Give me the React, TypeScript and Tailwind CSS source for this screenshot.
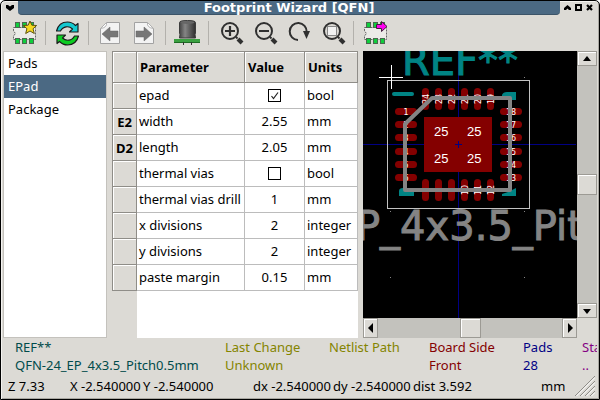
import React from "react";

const pages = ["Pads", "EPad", "Package"];

type Row = { label: string; name: string; value: string | boolean; units: string };

const rows: Row[] = [
  { label: "", name: "epad", value: true, units: "bool" },
  { label: "E2", name: "width", value: "2.55", units: "mm" },
  { label: "D2", name: "length", value: "2.05", units: "mm" },
  { label: "", name: "thermal vias", value: false, units: "bool" },
  { label: "", name: "thermal vias drill", value: "1", units: "mm" },
  { label: "", name: "x divisions", value: "2", units: "integer" },
  { label: "", name: "y divisions", value: "2", units: "integer" },
  { label: "", name: "paste margin", value: "0.15", units: "mm" },
];

const padY = [111.5, 124.5, 137.5, 151.5, 164.5, 177.5];
const padX = [425.5, 438.5, 451.5, 464.5, 477.5, 490.5];

function ChipBase() {
  return (
    <>
      <path d="M1.500 6.500h22v12h-22v-3.500l2-2.500-2-2.500z" fill="#ecebe8" stroke="#666" strokeDasharray="2 1" />
      {[3, 10, 17].map((x) => (
        <g key={x} fill="#0fce3c" stroke="#4c6650">
          <rect x={x + 0.5} y="1.500" width="4" height="5" />
          <rect x={x + 0.5} y="17.500" width="4" height="5" />
        </g>
      ))}
    </>
  );
}

function NewChipIcon() {
  return (
    <svg width="25" height="25" viewBox="0 0 25 25">
      <ChipBase />
      <path d="M18 0l1.900 4.200 4.700.3-3.600 3.300 1.300 4.700-4.300-2.500-4.300 2.500 1.200-4.800-3.600-3.200 4.800-.3z" fill="#f5d820" stroke="#5c5210" strokeWidth="1" />
    </svg>
  );
}

function ExportChipIcon() {
  return (
    <svg width="25" height="25" viewBox="0 0 25 25">
      <ChipBase />
      <path d="M13.500 3.500h5v-3l5.500 5-5.500 5v-3h-5z" fill="#ff00f0" stroke="#40203c" />
    </svg>
  );
}

function RefreshIcon() {
  return (
    <svg width="25" height="25" viewBox="0 0 25 25" stroke="#1c1c1c" strokeWidth="1.200" strokeLinejoin="round">
      <path d="M1.500 10C3 4 7.500 1 12.500 1c3.500 0 6 1.500 8 3.500l2.500-2v8.500h-8.500l3-3c-3.500-3.500-9.500-3-12 2z" fill="#14c9cf" />
      <path d="M23.500 15C22 21 17.500 24 12.500 24c-3.500 0-6-1.500-8-3.500l-2.500 2V14h8.500l-3 3c3.500 3.500 9.500 3 12-2z" fill="#0ccc22" />
    </svg>
  );
}

function PageIcon({ back }: { back?: boolean }) {
  return (
    <svg width="22" height="24" viewBox="0 0 22 24">
      <path d={back ? "M7.500 1.500h13v21h-19v-15z" : "M1.500 1.500h13l6 6v15h-19z"} fill="#f3f3f3" stroke="#a2a2a2" />
      <path d={back ? "M7.500 1.500q1 5-6 6z" : "M14.500 1.500q-1 5 6 6z"} fill="#fff" stroke="#b0b0b0" />
      <path d={back ? "M3 13l8-7v4h8v6h-8v4z" : "M19 13l-8-7v4H3v6h8v4z"} fill="#777" stroke="#666" strokeWidth=".5" />
    </svg>
  );
}

function CapacitorIcon() {
  return (
    <svg width="26" height="26" viewBox="0 0 26 26">
      <defs>
        <linearGradient id="can">
          <stop offset="0" stopColor="#444" />
          <stop offset=".35" stopColor="#858585" />
          <stop offset="1" stopColor="#2e2e2e" />
        </linearGradient>
      </defs>
      <path d="M5.500 2.500q0-2 8-2t8 2v11q0 .8-.8 1.400.8.400.8 1.600v1.500h-16v-1.500q0-1.200.8-1.600-.8-.6-.8-1.400z" fill="url(#can)" stroke="#3d3d3d" />
      <ellipse cx="13.500" cy="2.500" rx="7" ry="1.500" fill="#666" />
      <rect x="0" y="19" width="26" height="3" fill="#3aa040" />
      <path d="M0 22.500h26" stroke="#1c6c22" />
      <path d="M9.500 22v3M17.500 22v3" stroke="#333" strokeWidth="1" />
    </svg>
  );
}

function LensIcon({ kind }: { kind: "in" | "out" | "fit" }) {
  return (
    <svg width="24" height="24" viewBox="0 0 24 24" fill="none" stroke="#303030">
      <circle cx="10" cy="10" r="8" strokeWidth="2" />
      <path d="M16 16l1.500 1.500" strokeWidth="2" />
      <path d="M18 18l4 4" strokeWidth="4" />
      {kind === "fit" ? (
        <rect x="5.500" y="5.500" width="9" height="9" fill="#f2f2f2" stroke="#888" />
      ) : (
        <path d={kind === "in" ? "M5 10h10M10 5v10" : "M5 10h10"} strokeWidth="2.200" />
      )}
    </svg>
  );
}

function RedrawIcon() {
  return (
    <svg width="24" height="24" viewBox="0 0 24 24">
      <path d="M10 19A8.500 8.500 0 1 1 18.700 11" fill="none" stroke="#303030" strokeWidth="2" />
      <path d="M15 10h7l-3.500 8z" fill="#303030" />
    </svg>
  );
}

function ToolButton({ label, children }: { label: string; children: React.ReactNode }) {
  return (
    <button aria-label={label} className="flex h-9 w-[34px] items-center justify-center">
      {children}
    </button>
  );
}

function Separator() {
  return <div className="mx-1 h-6 w-px bg-[#b3b1ac]" />;
}

function ScrollButton({ label, path, className }: { label: string; path: string; className: string }) {
  return (
    <button
      aria-label={label}
      className={`flex shrink-0 items-center justify-center border border-[#9c9a94] bg-[#dcdad5] shadow-[inset_1px_1px_0_#fff] ${className}`}
    >
      <svg width="10" height="10" viewBox="0 0 10 10">
        <path d={path} fill="#000" />
      </svg>
    </button>
  );
}

function CheckBox({ label, checked }: { label: string; checked: boolean }) {
  return (
    <span className="mx-auto grid size-[13px]">
      <input
        type="checkbox"
        aria-label={label}
        defaultChecked={checked}
        className="peer col-start-1 row-start-1 size-[13px] appearance-none border border-black bg-white"
      />
      <svg
        className="pointer-events-none invisible col-start-1 row-start-1 peer-checked:visible"
        width="13"
        height="13"
        viewBox="0 0 13 13"
        fill="none"
        stroke="#222"
      >
        <path d="M3.500 7l2 2.500L10 3.500" strokeWidth="1.200" />
      </svg>
    </span>
  );
}

function FootprintView() {
  return (
    <svg
      className="block h-full min-w-0 flex-1 bg-black"
      viewBox="363 51 214 267"
      preserveAspectRatio="xMidYMid slice"
      role="img"
      aria-label="Footprint preview"
    >
      <g stroke="#000084" shapeRendering="crispEdges">
        <path d="M458.500 51v267M363 144.500h213" />
      </g>
      <g fill="#848484">
        <path d="M390 211h1v1h-1zM524 211h1v1h-1zM524 277h1v1h-1zM390 277h1v1h-1zM524 77h1v1h-1z" />
      </g>
      <g fontFamily="'DejaVu Sans', sans-serif" fontSize="40" strokeWidth="1">
        <text x="402" y="75" fill="#008484" stroke="#008484">REF**</text>
        <text x="356" y="240" fill="#848484" stroke="#848484">P_4x3.5_Pit</text>
      </g>
      <g fill="#008484">
        <rect x="392" y="92" width="22" height="4" rx="2" />
        <path d="M502 95q1-3 5-3h9v8h-7v-3h-7z" />
        <path d="M399 191q0-3 4-3h4l3 4h4v4h-15z" />
        <path d="M502 194l6-2 8-4v8h-14z" />
      </g>
      <g fill="#840000">
        {padY.map((y) => (
          <React.Fragment key={y}>
            <rect x="395" y={y - 3.5} width="22" height="7" rx="3.500" />
            <rect x="500" y={y - 3.5} width="22" height="7" rx="3.500" />
          </React.Fragment>
        ))}
        {padX.map((x) => (
          <React.Fragment key={x}>
            <rect x={x - 3.5} y="88" width="7" height="22" rx="3.500" />
            <rect x={x - 3.5} y="179" width="7" height="22" rx="3.500" />
          </React.Fragment>
        ))}
        <rect x="424" y="117" width="68" height="55" />
      </g>
      <path d="M458.500 141v7M455 144.500h7" stroke="#000084" />
      <g fill="#fff" fontFamily="'DejaVu Sans', sans-serif" fontSize="8" textAnchor="middle">
        {padY.map((y, i) => (
          <React.Fragment key={y}>
            <text x="406" y={y + 3}>{i + 1}</text>
            <text x="511" y={y + 3}>{18 - i}</text>
          </React.Fragment>
        ))}
        {padX.map((x, i) => (
          <React.Fragment key={x}>
            <text transform={`translate(${x + 3} 99) rotate(-90)`}>{24 - i}</text>
            <text transform={`translate(${x + 3} 190) rotate(-90)`}>{7 + i}</text>
          </React.Fragment>
        ))}
      </g>
      <g fill="#fff" fontFamily="'Liberation Sans', Arial, sans-serif" fontSize="13">
        <text x="434" y="136">25</text>
        <text x="467" y="136">25</text>
        <text x="434" y="163">25</text>
        <text x="467" y="163">25</text>
      </g>
      <path d="M432 98h78v92h-105v-66z" fill="none" stroke="#848484" strokeWidth="4" strokeLinejoin="round" />
      <rect x="387.500" y="80.500" width="142" height="128" fill="none" stroke="#c2c2c2" />
      <path d="M391.500 65v24M379 77.500h24" stroke="#fff" />
    </svg>
  );
}

function Info({ label, value, className }: { label: string; value: string; className: string }) {
  return (
    <div className={`min-w-0 overflow-hidden whitespace-nowrap ${className}`}>
      <div className="h-[18px]">{label}</div>
      <div className="h-[18px]">{value}</div>
    </div>
  );
}

export default function App() {
  return (
    <div className="h-screen bg-white">
      <div className="flex h-full flex-col overflow-hidden rounded-t-[5px] border border-black bg-[#dcdad5] font-['Noto_Sans',sans-serif] text-[13px] leading-[18px] text-black shadow-[inset_1px_1px_0_#f4f3f0,inset_-1px_-1px_0_#a9a7a1]">
        <header className="flex h-[14px] shrink-0 items-stretch">
          <button aria-label="Window menu" className="flex w-[17px] items-center justify-center">
            <svg width="8" height="6" viewBox="0 0 8 6">
              <path d="M0 0h2l2 1.500L6 0h2v3L4 6 0 3z" />
            </svg>
          </button>
          <h1 className="flex-1 rounded-b-[4px] border-b border-[#3c5468] bg-[#4b6983] text-center font-['DejaVu_Sans',sans-serif] text-[13px] leading-[13px] font-bold text-white">
            Footprint Wizard [QFN]
          </h1>
          <div className="flex w-[39px] items-center gap-1 pb-px pl-1">
            <button aria-label="Minimize">
              <svg className="block" width="7" height="7" viewBox="0 0 7 7">
                <path d="M3.500 1L7 4v2H5L3.500 4.500 2 6H0V4z" />
              </svg>
            </button>
            <button aria-label="Maximize" className="size-[7px] border-2 border-black" />
            <button aria-label="Close">
              <svg className="block" width="7" height="7" viewBox="0 0 7 7">
                <path d="M1 1l5 5M6 1L1 6" stroke="#000" strokeWidth="2.200" />
              </svg>
            </button>
          </div>
        </header>

        <nav aria-label="Tools" className="flex h-9 shrink-0 items-center pl-1.5">
          <ToolButton label="New footprint"><NewChipIcon /></ToolButton>
          <Separator />
          <ToolButton label="Reset parameters"><RefreshIcon /></ToolButton>
          <Separator />
          <ToolButton label="Previous page"><PageIcon back /></ToolButton>
          <ToolButton label="Next page"><PageIcon /></ToolButton>
          <Separator />
          <ToolButton label="3D viewer"><CapacitorIcon /></ToolButton>
          <Separator />
          <div className="-mr-0.5 flex pl-0.5">
            <ToolButton label="Zoom in"><LensIcon kind="in" /></ToolButton>
            <ToolButton label="Zoom out"><LensIcon kind="out" /></ToolButton>
            <ToolButton label="Redraw"><RedrawIcon /></ToolButton>
            <ToolButton label="Zoom to fit"><LensIcon kind="fit" /></ToolButton>
          </div>
          <Separator />
          <ToolButton label="Export to editor"><ExportChipIcon /></ToolButton>
        </nav>

        <main className="flex min-h-0 flex-1 px-0.5">
          <ul className="w-[104px] shrink-0 border border-[#c4c2bd] bg-white">
            {pages.map((p) => (
              <li key={p}>
                <button
                  className={`block h-[23px] w-full pb-0.5 pl-1 text-left ${p === "EPad" ? "bg-[#4b6983] text-white" : ""}`}
                >
                  {p}
                </button>
              </li>
            ))}
          </ul>

          <section className="mx-[5px] w-[246px] shrink-0 bg-[linear-gradient(90deg,#dcdad5_25px,#fff_25px)]">
            <table className="w-full table-fixed border-separate border-spacing-0">
              <colgroup>
                <col className="w-[25px]" />
                <col className="w-[108px]" />
                <col className="w-[60px]" />
                <col className="w-[53px]" />
              </colgroup>
              <thead>
                <tr className="h-8 bg-[#dcdad5] text-left">
                  <td className="border border-[#8f8d88] p-0 shadow-[inset_1px_1px_0_#fff]" />
                  <th className="border-y border-r border-[#8f8d88] p-0 pl-[3px] shadow-[inset_1px_1px_0_#fff]">Parameter</th>
                  <th className="border-y border-r border-[#8f8d88] p-0 pl-[3px] shadow-[inset_1px_1px_0_#fff]">Value</th>
                  <th className="border-y border-r border-[#8f8d88] p-0 pl-[3px] shadow-[inset_1px_1px_0_#fff]">Units</th>
                </tr>
              </thead>
              <tbody>
                {rows.map((r) => (
                  <tr key={r.name} className="h-[26px]">
                    <th className="border-x border-b border-[#8f8d88] bg-[#dcdad5] p-0 text-center shadow-[inset_1px_1px_0_#fff]">
                      {r.label}
                    </th>
                    <td className="border-r border-b border-[#bcbcbc] p-0 pb-0.5 pl-0.5 whitespace-nowrap">{r.name}</td>
                    <td className="border-r border-b border-[#bcbcbc] p-0 text-center">
                      {typeof r.value === "boolean" ? (
                        <CheckBox label={r.name} checked={r.value} />
                      ) : (
                        <div className="pb-0.5">{r.value}</div>
                      )}
                    </td>
                    <td className="border-r border-b border-[#bcbcbc] p-0 pb-0.5 pl-0.5">{r.units}</td>
                  </tr>
                ))}
              </tbody>
            </table>
          </section>

          <section className="flex min-w-0 flex-1 flex-col">
            <div className="flex min-h-0 flex-1">
              <FootprintView />
              <div className="flex w-5 shrink-0 flex-col bg-[#c3c2bd]">
                <ScrollButton label="Scroll up" className="h-[15px] w-5" path="M5 2l4 5H1z" />
                <div className="grow" />
                <div className="h-[21px] border border-[#9c9a94] bg-[#dcdad5] shadow-[inset_1px_1px_0_#fff]" />
                <div className="grow" />
                <ScrollButton label="Scroll down" className="h-[15px] w-5" path="M5 8L1 3h8z" />
              </div>
            </div>
            <div className="mr-5 flex h-5 shrink-0 bg-[#c3c2bd]">
              <ScrollButton label="Scroll left" className="h-5 w-[15px]" path="M2 5l5-5v10z" />
              <div className="grow" />
              <div className="w-[21px] border border-[#9c9a94] bg-[#dcdad5] shadow-[inset_1px_1px_0_#fff]" />
              <div className="grow" />
              <ScrollButton label="Scroll right" className="h-5 w-[15px]" path="M8 5L3 0v10z" />
            </div>
          </section>
        </main>

        <footer className="shrink-0 pr-0.5 pb-px">
          <div className="flex pl-3.5">
            <Info label="REF**" value="QFN-24_EP_4x3.5_Pitch0.5mm" className="w-[210px] text-[#004b4b]" />
            <Info label="Last Change" value="Unknown" className="w-[104px] text-[#848400]" />
            <Info label="Netlist Path" value="" className="w-[100px] text-[#848400]" />
            <Info label="Board Side" value="Front" className="w-[94px] text-[#840000]" />
            <Info label="Pads" value="28" className="w-[59px] text-[#000084]" />
            <Info label="Status" value=".." className="flex-1 text-[#840084]" />
          </div>
          <div className="flex h-6 items-center pr-0.5 pl-[7px] whitespace-nowrap">
            <span className="w-[62px]">Z 7.33</span>
            <span className="w-[73px]">X -2.540000</span>
            <span className="w-[110px]">Y -2.540000</span>
            <span className="w-20">dx -2.540000</span>
            <span className="w-20">dy -2.540000</span>
            <span className="w-32">dist 3.592</span>
            <span>mm</span>
            <svg className="ml-auto" width="20" height="20" viewBox="0 0 20 20">
              <path d="M0 20L20 0M5 20L20 5M10 20L20 10M15 20l5-5" stroke="#8f8d88" />
              <path d="M1.500 20L20 1.500M6.500 20L20 6.500M11.500 20l8.500-8.500M16.500 20l3.500-3.500" stroke="#fff" />
            </svg>
          </div>
        </footer>
      </div>
    </div>
  );
}
